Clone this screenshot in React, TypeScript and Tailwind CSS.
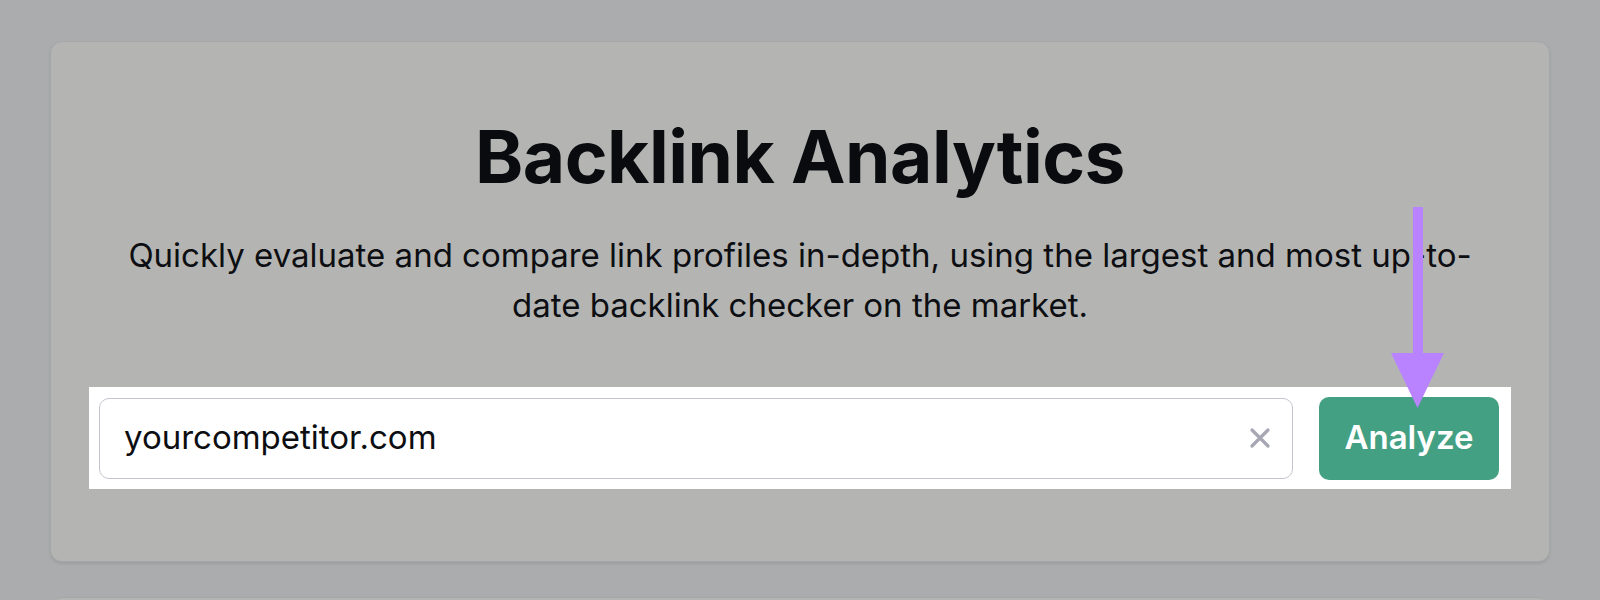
function DownArrow() {
  return (
    <svg
      className="absolute left-[1389px] top-[207px]"
      width="56"
      height="202"
      viewBox="0 0 56 202"
    >
      <rect x="24" y="0" width="10" height="150" fill="#b983ff" />
      <polygon points="2,146 55,146 28.5,201" fill="#b983ff" />
    </svg>
  );
}

function ClearIcon() {
  return (
    <svg width="22" height="22" viewBox="0 0 22 22" className="shrink-0">
      <path
        d="M3 3L19 19M19 3L3 19"
        stroke="#a6a7b2"
        strokeWidth="3.2"
        strokeLinecap="round"
      />
    </svg>
  );
}

function SearchBar() {
  return (
    <div className="w-[1422px] h-[102px] bg-white flex items-center gap-[26px] pl-[10px] pr-[12px]">
      <div className="flex-1 h-[81px] rounded-[10px] border-[1.5px] border-[#c4c6cd] bg-white flex items-center pl-[24px] pr-[21px]">
        <span className="flex-1 text-[33px] text-[#0d0e12]">yourcompetitor.com</span>
        <ClearIcon />
      </div>
      <button className="w-[180px] h-[83px] rounded-[10px] bg-[#44a082] text-white text-[33px] font-semibold">
        Analyze
      </button>
    </div>
  );
}

export default function App() {
  return (
    <div
      className="relative w-full h-[600px] overflow-hidden bg-[#abacae] px-[50px] pt-[41px]"
      style={{ fontFamily: 'Inter, "Liberation Sans", sans-serif' }}
    >
      {/* Hero card */}
      <div className="h-[521px] rounded-xl bg-[#b4b5b3] border border-[#a4a6a8] shadow-[0_2px_3px_rgba(0,0,0,0.08)] flex flex-col items-center pt-[78px]">
        <h1 className="text-[73px] leading-none font-bold tracking-[-0.5px] text-[#0a0b0f]">
          Backlink Analytics
        </h1>
        <p className="mt-[37px] text-[33px] leading-[50px] text-center text-[#0d0e12]">
          Quickly evaluate and compare link profiles in-depth, using the largest and most up-to-
          <br />
          date backlink checker on the market.
        </p>
        <div className="mt-[57px]">
          <SearchBar />
        </div>
      </div>

      {/* Next card, cut off by the viewport */}
      <div className="mt-[35px] h-[200px] rounded-xl bg-[#b4b5b3] border border-[#a4a6a8]" />

      <DownArrow />
    </div>
  );
}
